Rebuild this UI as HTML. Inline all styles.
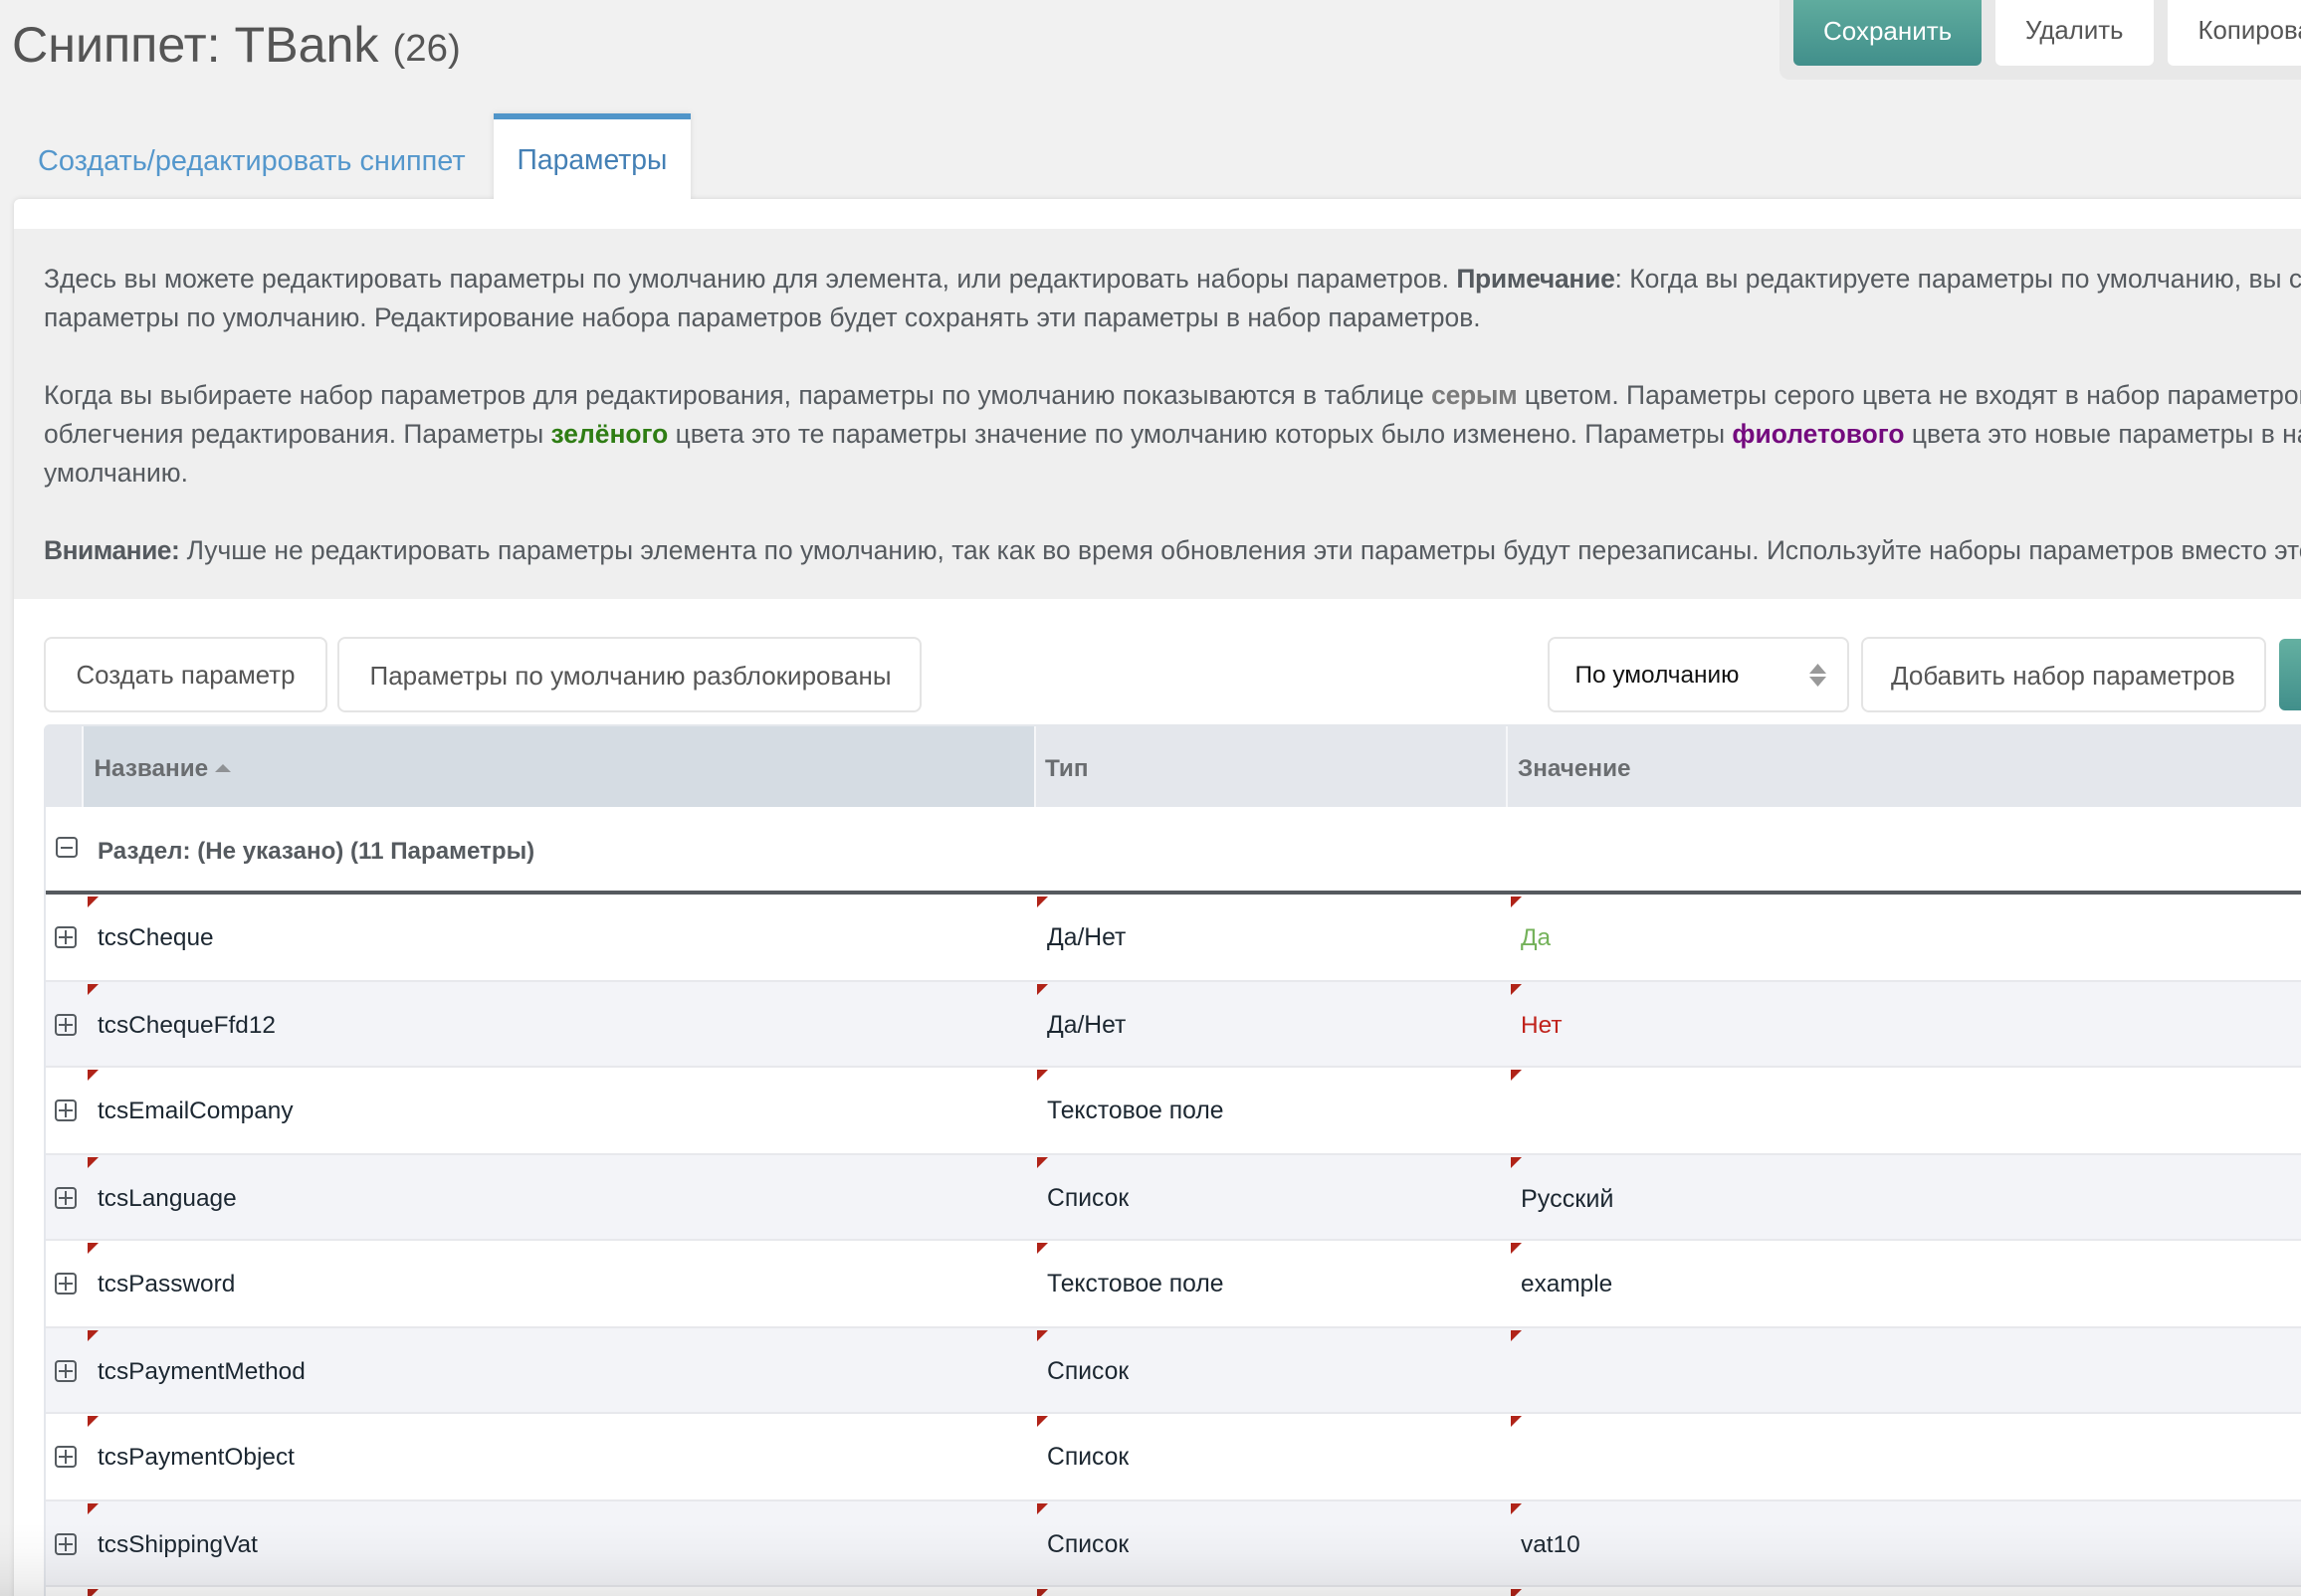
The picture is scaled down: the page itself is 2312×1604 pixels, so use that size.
<!DOCTYPE html>
<html lang="ru"><head><meta charset="utf-8"><title>Сниппет: TBank</title>
<style>
*{box-sizing:border-box}
html,body{margin:0;padding:0;width:2312px;height:1604px;overflow:hidden}
body{position:relative;background:#f1f1f1;font-family:"Liberation Sans",sans-serif;font-size:24.3px;color:#555}
#w{position:absolute;left:0;top:0;width:2312px;height:1604px;overflow:hidden;background:#f1f1f1}
div{white-space:nowrap}
.a{position:absolute}
.t{position:absolute;line-height:40px;white-space:nowrap}
.btn{position:absolute;top:640px;height:76px;background:#fff;border:2px solid #e4e4e4;border-radius:8px;color:#555;font-size:25.85px;line-height:74px;white-space:nowrap}
.line{position:absolute;left:44px;line-height:40px;white-space:nowrap;color:#555a5f;font-size:26.42px}
.row{position:absolute;left:46px;width:2266px;background:#fff;border-bottom:2px solid #e7e8ec}
.row.alt{background:#f3f4f8}
.row .t{top:23.5px;color:#1c2731;font-size:24.4px}
.row .n{left:52px}.row .y{left:1006px;font-size:24.7px}.row .v{left:1482px}
.tri{position:absolute;top:2px;width:11px;height:11px;background:#b02318;clip-path:polygon(0 0,100% 0,0 100%)}
.pl{position:absolute;left:9px;top:32px;width:22px;height:22px;border:2px solid #555b60;border-radius:4px}
.pl:before,.pl:after{content:"";position:absolute;background:#555b60}
.pl:before{left:2px;right:2px;top:8px;height:2px}
.pl:after{top:2px;bottom:2px;left:8px;width:2px}
</style></head><body><div id="w">

<div class="t" style="left:12px;top:25px;font-size:50.2px;line-height:40px;color:#555">Сниппет: TBank <span style="font-size:38.4px;position:relative;top:-1.5px">(26)</span></div>

<div class="a" style="left:1788px;top:-10px;width:540px;height:90px;background:#e8e8e8;border-radius:10px"></div>
<div class="a" style="left:1802px;top:-10px;width:189px;height:76px;border-radius:6px;background:linear-gradient(#64b0a1,#418f8b)"></div>
<div class="t" style="left:1832px;top:10.5px;color:#fff;font-size:26px">Сохранить</div>
<div class="a" style="left:2005px;top:-10px;width:159px;height:76px;border-radius:6px;background:#fff"></div>
<div class="t" style="left:2035px;top:10.5px;color:#555;font-size:25.8px">Удалить</div>
<div class="a" style="left:2178px;top:-10px;width:150px;height:76px;border-radius:6px;background:#fff"></div>
<div class="t" style="left:2208.5px;top:10.5px;color:#555;font-size:25.8px">Копировать</div>

<div class="a" style="left:14px;top:200px;width:2310px;height:1420px;background:#fff;border-radius:6px 0 0 0;box-shadow:0 0 6px rgba(0,0,0,.12)"></div>
<div class="a" style="left:496px;top:114px;width:198px;height:86px;background:#fff;border-top:6px solid #5095c9;box-shadow:0 0 6px rgba(0,0,0,.1)"></div>
<div class="a" style="left:488px;top:200px;width:214px;height:30px;background:#fff"></div>
<div class="t" style="left:38px;top:142px;color:#5497cc;font-size:28.9px">Создать/редактировать сниппет</div>
<div class="t" style="left:519.5px;top:140px;color:#4480b5;font-size:28.3px">Параметры</div>

<div class="a" style="left:14px;top:230px;width:2298px;height:372px;background:#efefef"></div>
<div class="line" style="top:260px;font-size:26.47px">Здесь вы можете редактировать параметры по умолчанию для элемента, или редактировать наборы параметров. <b style="letter-spacing:-.3px">Примечание</b>: Когда вы редактируете параметры по умолчанию, вы сохраняете</div>
<div class="line" style="top:299px">параметры по умолчанию. Редактирование набора параметров будет сохранять эти параметры в набор параметров.</div>
<div class="line" style="top:377px;font-size:26.47px">Когда вы выбираете набор параметров для редактирования, параметры по умолчанию показываются в таблице <b style="color:#7b7b7b;letter-spacing:-.3px">серым</b> цветом. Параметры серого цвета не входят в набор параметров</div>
<div class="line" style="top:416px">облегчения редактирования. Параметры <b style="color:#2f7d14">зелёного</b> цвета это те параметры значение по умолчанию которых было изменено. Параметры <b style="color:#740a7e">фиолетового</b> цвета это новые параметры в наборе</div>
<div class="line" style="top:455px">умолчанию.</div>
<div class="line" style="top:533px"><b style="letter-spacing:-.5px">Внимание:</b> Лучше не редактировать параметры элемента по умолчанию, так как во время обновления эти параметры будут перезаписаны. Используйте наборы параметров вместо этого.</div>

<div class="btn" style="left:44px;width:285px;padding-left:30.5px">Создать параметр</div>
<div class="btn" style="left:339px;width:587px;padding-left:30.5px;font-size:26px">Параметры по умолчанию разблокированы</div>
<div class="btn" style="left:1555px;width:303px;padding-left:25.5px;color:#111;font-size:24.4px;line-height:74.5px">По умолчанию</div>
<div class="a" style="left:1818px;top:667px;width:17px;height:10px;background:#999;clip-path:polygon(50% 0,100% 100%,0 100%)"></div>
<div class="a" style="left:1818px;top:680px;width:17px;height:10px;background:#999;clip-path:polygon(0 0,100% 0,50% 100%)"></div>
<div class="btn" style="left:1870px;width:407px;padding-left:28px;font-size:26.03px">Добавить набор параметров</div>
<div class="a" style="left:2290px;top:642px;width:40px;height:72px;border-radius:6px;background:linear-gradient(#64b0a1,#418f8b)"></div>

<div class="a" style="left:44px;top:728px;width:2268px;height:83px;background:#e4e7ec;border-radius:6px 0 0 0"></div>
<div class="a" style="left:84px;top:730px;width:955px;height:81px;background:#d5dce3"></div>
<div class="a" style="left:82px;top:730px;width:2px;height:81px;background:#f6f7f9"></div>
<div class="a" style="left:1039px;top:730px;width:2px;height:81px;background:#f6f7f9"></div>
<div class="a" style="left:1513px;top:730px;width:2px;height:81px;background:#f6f7f9"></div>
<div class="t" style="left:94.5px;top:752.5px;font-weight:bold;color:#6a6d70">Название</div>
<div class="a" style="left:216px;top:768px;width:16px;height:8px;background:#8f9295;clip-path:polygon(50% 0,100% 100%,0 100%)"></div>
<div class="t" style="left:1050px;top:752.5px;font-weight:bold;color:#6a6d70">Тип</div>
<div class="t" style="left:1525px;top:752.5px;font-weight:bold;color:#6a6d70">Значение</div>

<div class="a" style="left:44px;top:811px;width:2px;height:800px;background:#e4e7ec"></div>
<div class="a" style="left:56px;top:841px;width:22px;height:21px;border:2px solid #555b60;border-radius:4px"><div class="a" style="left:3px;right:3px;top:7.5px;height:2px;background:#555b60"></div></div>
<div class="t" style="left:98px;top:836px;font-weight:bold;font-size:24.12px;color:#555a5f">Раздел: (Не указано) (11 Параметры)</div>
<div class="a" style="left:46px;top:895px;width:2266px;height:4px;background:#555a5f"></div>

<div class="row" style="top:899px;height:88px"><i class="tri" style="left:42px"></i><i class="tri" style="left:996px"></i><i class="tri" style="left:1472px"></i><i class="pl"></i><div class="t n">tcsCheque</div><div class="t y">Да/Нет</div><div class="t v" style="color:#74b25a">Да</div></div>
<div class="row alt" style="top:987px;height:86px"><i class="tri" style="left:42px"></i><i class="tri" style="left:996px"></i><i class="tri" style="left:1472px"></i><i class="pl"></i><div class="t n">tcsChequeFfd12</div><div class="t y">Да/Нет</div><div class="t v" style="color:#c0231c">Нет</div></div>
<div class="row" style="top:1073px;height:88px"><i class="tri" style="left:42px"></i><i class="tri" style="left:996px"></i><i class="tri" style="left:1472px"></i><i class="pl"></i><div class="t n">tcsEmailCompany</div><div class="t y">Текстовое поле</div></div>
<div class="row alt" style="top:1161px;height:86px"><i class="tri" style="left:42px"></i><i class="tri" style="left:996px"></i><i class="tri" style="left:1472px"></i><i class="pl"></i><div class="t n">tcsLanguage</div><div class="t y">Список</div><div class="t v" style="font-size:25.2px">Русский</div></div>
<div class="row" style="top:1247px;height:88px"><i class="tri" style="left:42px"></i><i class="tri" style="left:996px"></i><i class="tri" style="left:1472px"></i><i class="pl"></i><div class="t n">tcsPassword</div><div class="t y">Текстовое поле</div><div class="t v">example</div></div>
<div class="row alt" style="top:1335px;height:86px"><i class="tri" style="left:42px"></i><i class="tri" style="left:996px"></i><i class="tri" style="left:1472px"></i><i class="pl"></i><div class="t n">tcsPaymentMethod</div><div class="t y">Список</div></div>
<div class="row" style="top:1421px;height:88px"><i class="tri" style="left:42px"></i><i class="tri" style="left:996px"></i><i class="tri" style="left:1472px"></i><i class="pl"></i><div class="t n">tcsPaymentObject</div><div class="t y">Список</div></div>
<div class="row alt" style="top:1509px;height:86px"><i class="tri" style="left:42px"></i><i class="tri" style="left:996px"></i><i class="tri" style="left:1472px"></i><i class="pl"></i><div class="t n">tcsShippingVat</div><div class="t y">Список</div><div class="t v">vat10</div></div>
<div class="row" style="top:1595px;height:88px"><i class="tri" style="left:42px"></i><i class="tri" style="left:996px"></i><i class="tri" style="left:1472px"></i></div>

<div class="a" style="left:0;top:1530px;width:2312px;height:74px;background:linear-gradient(rgba(0,0,0,0),rgba(0,0,0,.02) 40%,rgba(0,0,0,.06) 80%,rgba(0,0,0,.09))"></div>
</div></body></html>
